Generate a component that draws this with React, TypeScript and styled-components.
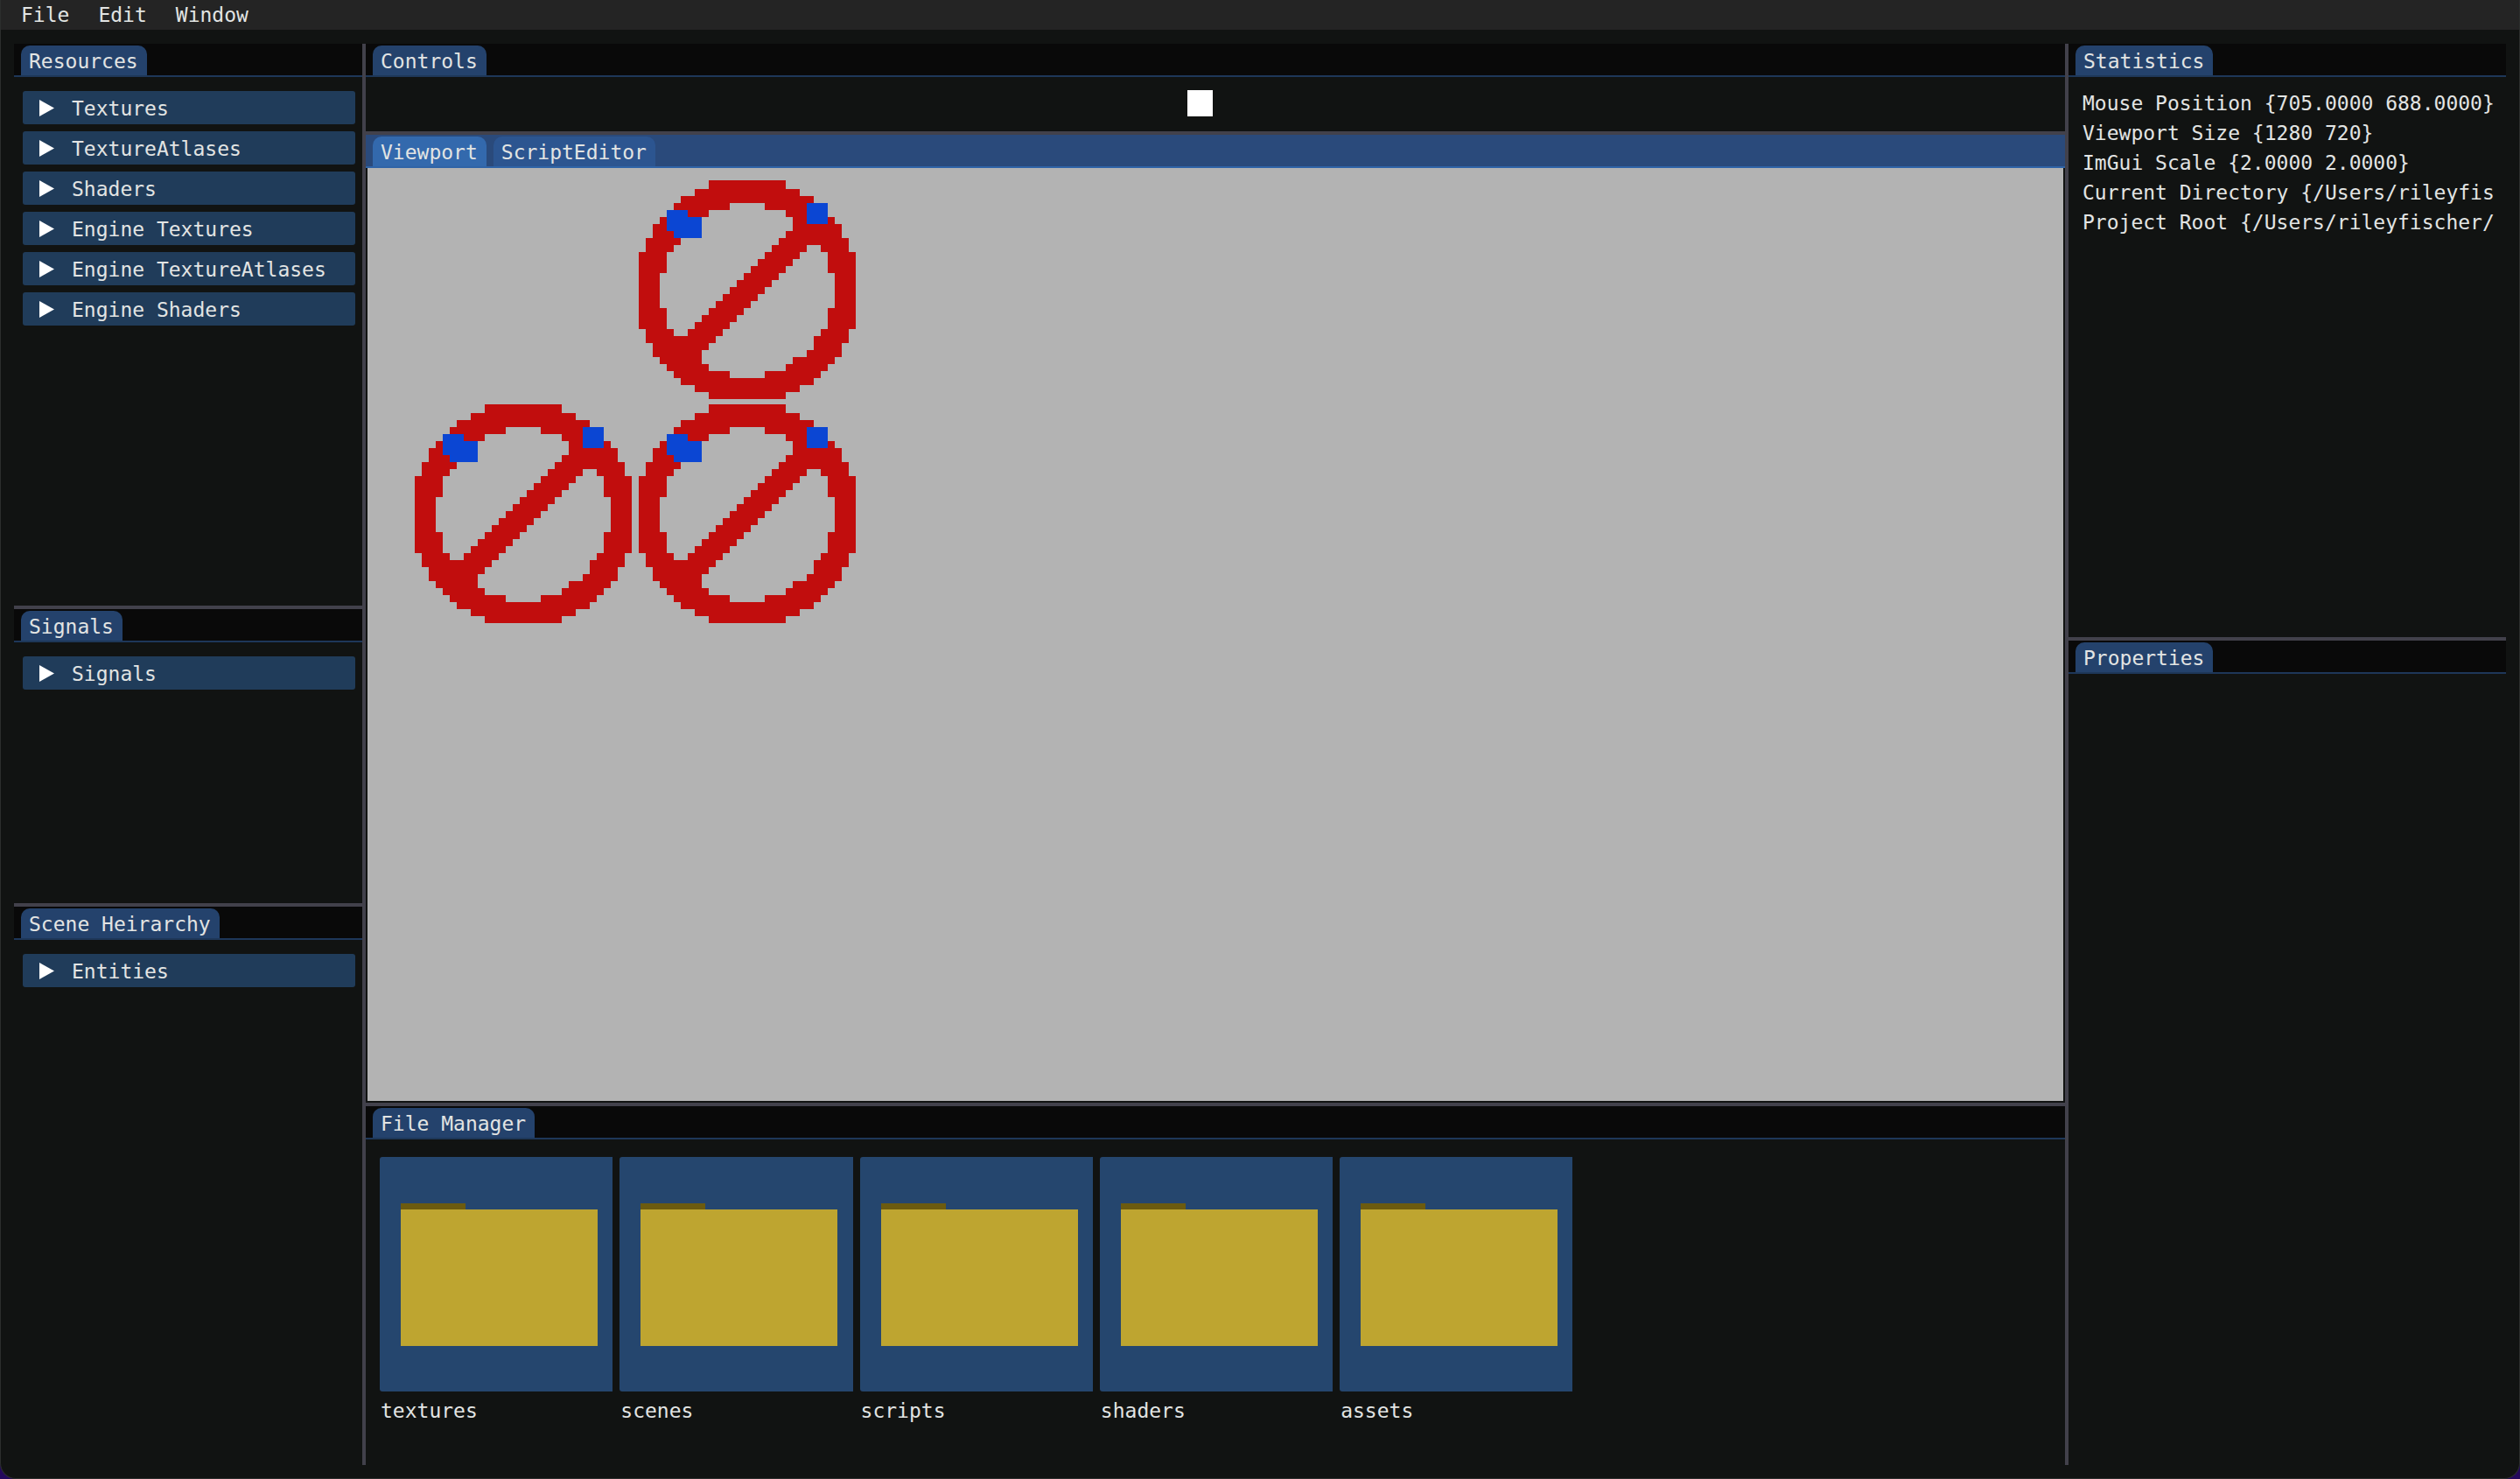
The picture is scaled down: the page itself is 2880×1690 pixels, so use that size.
import React from "react";
import styled, { createGlobalStyle } from "styled-components";

const color = {
  window: "#111312",
  menuBar: "#242424",
  strip: "#090909",
  splitter: "#42414b",
  tab: "#24426c",
  tabLine: "#1e3759",
  focusStrip: "#2a4a7b",
  focusTab: "#3369ad",
  focusTabIdle: "#2c5590",
  focusLine: "#2f64a7",
  header: "#203c5a",
  tile: "#25466e",
  text: "#e2e4e3",
  scene: "#b3b3b3",
};

const Global = createGlobalStyle`
  * { box-sizing: border-box; }
  html, body, #root { height: 100%; margin: 0; }
  body { background: #24085c; }
  button { font: inherit; color: inherit; border: 0; margin: 0; padding: 0; cursor: pointer; }
`;

const Shell = styled.div`
  display: flex;
  flex-direction: column;
  height: 100vh;
  overflow: hidden;
  background: ${color.window};
  border: solid #2c2e2d;
  border-width: 0 1px 1px;
  border-radius: 0 0 18px 18px;
  color: ${color.text};
  font: 23px/26px "DejaVu Sans Mono", "Liberation Mono", monospace;
  white-space: pre;
`;

const MenuBar = styled.nav`
  flex: none;
  display: flex;
  gap: 33px;
  height: 34px;
  padding: 3px 23px;
  background: ${color.menuBar};
`;

const MenuItem = styled.button`
  background: none;
`;

const Dock = styled.main`
  flex: 1;
  min-height: 0;
  display: grid;
  grid-template-columns: 398px minmax(0, 1fr) 500px;
  column-gap: 4px;
  margin: 16px 15px 15px;
  background: ${color.splitter};
`;

const Column = styled.div<{ $rows: string }>`
  display: grid;
  grid-template-rows: ${(p) => p.$rows};
  row-gap: 4px;
  min-width: 0;
  min-height: 0;
`;

const Pane = styled.section`
  display: flex;
  flex-direction: column;
  min-width: 0;
  min-height: 0;
  overflow: hidden;
  background: ${color.window};
`;

const TabStrip = styled.div<{ $focused?: boolean }>`
  flex: none;
  display: flex;
  align-items: flex-end;
  gap: 8px;
  height: 38px;
  padding-left: 8px;
  border-bottom: 2px solid ${(p) => (p.$focused ? color.focusLine : color.tabLine)};
  background: ${(p) => (p.$focused ? color.focusStrip : color.strip)};
`;

const Tab = styled.button<{ $fill: string }>`
  height: 34px;
  padding: 1px 10px 0 9px;
  border-radius: 10px 10px 0 0;
  background: ${(p) => p.$fill};
`;

const HeaderList = styled.div`
  display: flex;
  flex-direction: column;
  gap: 8px;
  padding: 16px 8px 0 10px;
`;

const Header = styled.button`
  display: flex;
  align-items: center;
  gap: 20px;
  height: 38px;
  padding-left: 19px;
  border-radius: 3px;
  background: ${color.header};
  text-align: left;
`;

const HeaderLabel = styled.span`
  padding-top: 2px;
`;

const Controls = styled.div`
  flex: 1;
  display: flex;
  align-items: flex-start;
  justify-content: center;
  padding: 15px 35px 0 0;
`;

const PlayButton = styled.button`
  width: 29px;
  height: 30px;
  background: #fff;
`;

const Viewport = styled.div`
  flex: 1;
  min-height: 0;
  margin: 0 2px 2px;
  background: ${color.scene};

  svg {
    display: block;
    width: 100%;
    height: 100%;
  }
`;

const FileGrid = styled.div`
  display: grid;
  grid-template-columns: repeat(7, minmax(0, 1fr));
  column-gap: 8px;
  padding: 20px 14px 0 16px;
`;

const FileItem = styled.figure`
  margin: 0;
`;

const FileTile = styled.button`
  display: flex;
  align-items: flex-start;
  width: 100%;
  height: 268px;
  padding: 53px 0 0 24px;
  border-radius: 3px 0 0 3px;
  background: ${color.tile};

  svg {
    flex: none;
  }
`;

const FileName = styled.figcaption`
  padding: 9px 0 0 1px;
`;

const Stats = styled.ul`
  display: flex;
  flex-direction: column;
  gap: 8px;
  margin: 0;
  padding: 17px 0 0 16px;
  list-style: none;
`;

const Arrow = () => (
  <svg width="17" height="19" viewBox="0 0 17 19" aria-hidden="true">
    <path d="M0 0L17 9.500L0 19Z" fill="#fff" />
  </svg>
);

const Folder = () => (
  <svg width="225" height="163" viewBox="0 0 225 163" shapeRendering="crispEdges" aria-hidden="true">
    <rect width="74" height="7" fill="#6c5b0f" />
    <rect y="7" width="225" height="156" fill="#bea530" />
  </svg>
);

// Filled runs of each sprite row, as [start, end) texel pairs.
const signRows: number[][] = [
  [10, 21],
  [8, 23],
  [6, 25],
  [5, 13, 18, 26],
  [4, 10, 21, 27],
  [3, 9, 22, 28],
  [2, 9, 22, 29],
  [2, 9, 21, 29],
  [1, 6, 20, 30],
  [1, 5, 19, 24, 26, 30],
  [0, 4, 18, 23, 27, 31],
  [0, 4, 17, 22, 27, 31],
  [0, 4, 16, 21, 27, 31],
  [0, 3, 15, 20, 28, 31],
  [0, 3, 14, 19, 28, 31],
  [0, 3, 13, 18, 28, 31],
  [0, 3, 12, 17, 28, 31],
  [0, 3, 11, 16, 28, 31],
  [0, 4, 10, 15, 27, 31],
  [0, 4, 9, 14, 27, 31],
  [0, 4, 8, 13, 27, 31],
  [1, 5, 7, 12, 26, 30],
  [1, 11, 25, 30],
  [2, 10, 25, 29],
  [2, 9, 24, 29],
  [3, 9, 22, 28],
  [4, 10, 21, 27],
  [5, 13, 18, 26],
  [6, 25],
  [8, 23],
  [10, 21],
];

const TEXEL = 8;

const signPath = signRows
  .map((runs, row) => {
    const y = row === 0 ? 0 : row * TEXEL + 2;
    const h = row === 0 ? TEXEL + 2 : TEXEL;
    let d = "";
    for (let i = 0; i < runs.length; i += 2) {
      const x = runs[i] * TEXEL;
      d += `M${x} ${y}H${runs[i + 1] * TEXEL}V${y + h}H${x}Z`;
    }
    return d;
  })
  .join("");

const Sign = ({ x, y }: { x: number; y: number }) => (
  <g transform={`translate(${x} ${y})`}>
    <path d={signPath} fill="#c10d0d" />
    <path d="M32 34H56V42H72V66H40V58H32ZM192 26H216V50H192Z" fill="#0b46d3" />
  </g>
);

const signs = [
  { x: 310, y: 14 },
  { x: 54, y: 270 },
  { x: 310, y: 270 },
];

const resources = [
  "Textures",
  "TextureAtlases",
  "Shaders",
  "Engine Textures",
  "Engine TextureAtlases",
  "Engine Shaders",
];

const stats = [
  "Mouse Position {705.0000 688.0000}",
  "Viewport Size {1280 720}",
  "ImGui Scale {2.0000 2.0000}",
  "Current Directory {/Users/rileyfis",
  "Project Root {/Users/rileyfischer/",
];

const folders = ["textures", "scenes", "scripts", "shaders", "assets"];

const Panel = ({ title, children }: { title: string; children?: React.ReactNode }) => (
  <Pane>
    <TabStrip>
      <Tab $fill={color.tab}>{title}</Tab>
    </TabStrip>
    {children}
  </Pane>
);

const Headers = ({ items }: { items: string[] }) => (
  <HeaderList>
    {items.map((item) => (
      <Header key={item} aria-expanded={false}>
        <Arrow />
        <HeaderLabel>{item}</HeaderLabel>
      </Header>
    ))}
  </HeaderList>
);

export default function App() {
  return (
    <Shell>
      <Global />
      <MenuBar>
        {["File", "Edit", "Window"].map((m) => (
          <MenuItem key={m}>{m}</MenuItem>
        ))}
      </MenuBar>
      <Dock>
        <Column $rows="642fr 336fr 638fr">
          <Panel title="Resources">
            <Headers items={resources} />
          </Panel>
          <Panel title="Signals">
            <Headers items={["Signals"]} />
          </Panel>
          <Panel title="Scene Heirarchy">
            <Headers items={["Entities"]} />
          </Panel>
        </Column>
        <Column $rows="100px minmax(0, 1106fr) minmax(0, 410fr)">
          <Panel title="Controls">
            <Controls>
              <PlayButton aria-label="Play" />
            </Controls>
          </Panel>
          <Pane>
            <TabStrip $focused>
              <Tab $fill={color.focusTab}>Viewport</Tab>
              <Tab $fill={color.focusTabIdle}>ScriptEditor</Tab>
            </TabStrip>
            <Viewport>
              <svg shapeRendering="crispEdges" role="img" aria-label="Scene">
                {signs.map((s) => (
                  <Sign key={`${s.x}-${s.y}`} {...s} />
                ))}
              </svg>
            </Viewport>
          </Pane>
          <Panel title="File Manager">
            <FileGrid>
              {folders.map((name) => (
                <FileItem key={name}>
                  <FileTile aria-label={name}>
                    <Folder />
                  </FileTile>
                  <FileName>{name}</FileName>
                </FileItem>
              ))}
            </FileGrid>
          </Panel>
        </Column>
        <Column $rows="678fr 942fr">
          <Panel title="Statistics">
            <Stats>
              {stats.map((line) => (
                <li key={line}>{line}</li>
              ))}
            </Stats>
          </Panel>
          <Panel title="Properties" />
        </Column>
      </Dock>
    </Shell>
  );
}
